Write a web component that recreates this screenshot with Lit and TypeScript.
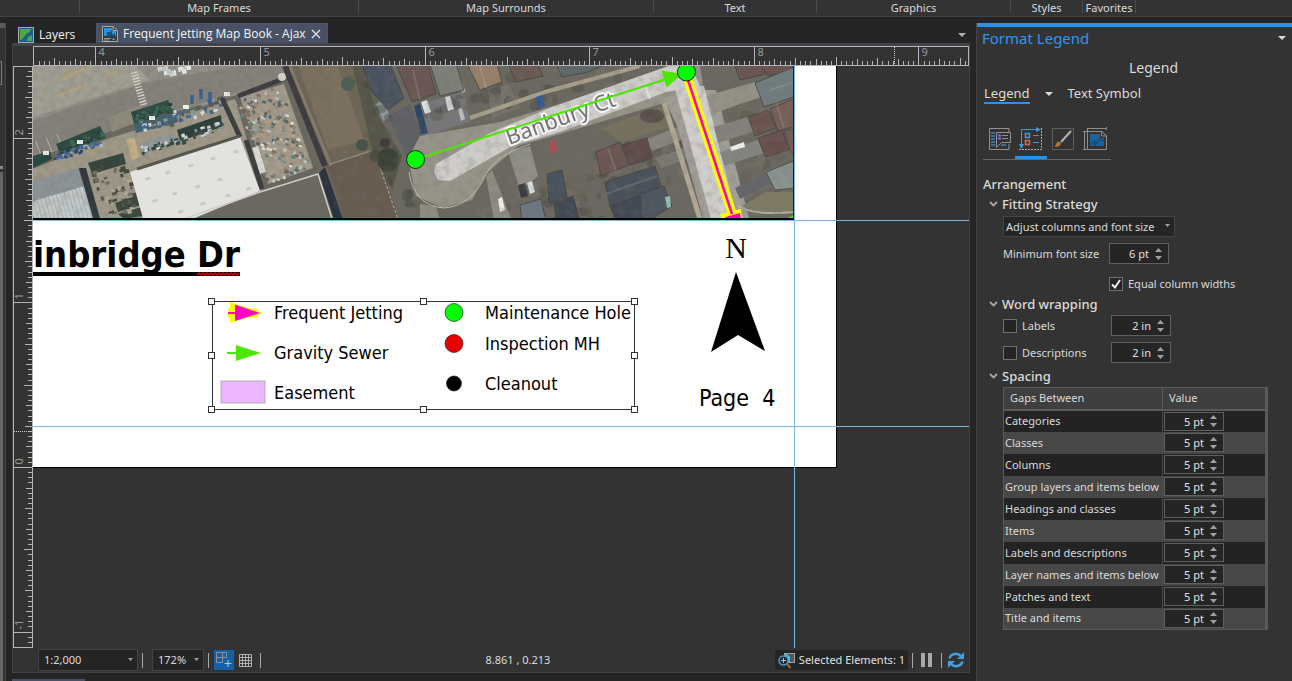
import { LitElement, html, svg, css, nothing } from "lit";
import { customElement, property, state } from "lit/decorators.js";
import { classMap } from "lit/directives/class-map.js";

type Pt = [number, number];

/* Small deterministic generator, so the aerial clutter is stable between renders. */
function generator(seed: number) {
  let s = seed;
  return () => {
    s = (s * 16807) % 2147483647;
    return s / 2147483647;
  };
}

/* Scatters small rotated blocks in the parallelogram origin + u*a + v*b. */
function scatter(seed: number, n: number, o: Pt, a: Pt, b: Pt, colors: string[], min: number, max: number, angle: number) {
  const r = generator(seed);
  return Array.from({ length: n }, () => {
    const u = r();
    const v = r();
    const x = o[0] + u * a[0] + v * b[0];
    const y = o[1] + u * a[1] + v * b[1];
    const w = min + r() * (max - min);
    const h = min + r() * (max - min) * 0.7;
    const c = colors[Math.floor(r() * colors.length)];
    return svg`<rect x=${x} y=${y} width=${w} height=${h} fill=${c} transform="rotate(${angle} ${x} ${y})"/>`;
  });
}

function blobs(seed: number, n: number, o: Pt, a: Pt, b: Pt, colors: string[], min: number, max: number) {
  const r = generator(seed);
  return Array.from({ length: n }, () => {
    const u = r();
    const v = r();
    const c = colors[Math.floor(r() * colors.length)];
    return svg`<ellipse cx=${o[0] + u * a[0] + v * b[0]} cy=${o[1] + u * a[1] + v * b[1]}
      rx=${min + r() * (max - min)} ry=${min + r() * (max - min)} fill=${c} opacity="0.45"/>`;
  });
}

const poly = (fill: string, points: string) => svg`<polygon fill=${fill} points=${points}/>`;

const downArrow = html`<svg viewBox="0 0 8 4" width="8" height="4" aria-hidden="true"><path d="M0 0h8L4 4z" fill="currentColor"/></svg>`;

@customElement("scale-ruler")
class ScaleRuler extends LitElement {
  @property({ type: Boolean, reflect: true }) vertical = false;
  @property({ type: Number }) origin = 0;
  @property({ type: Number }) cursor = 0;
  @state() private length = 0;
  private observer = new ResizeObserver(() => this.measure());

  static styles = css`
    :host { display: block; box-sizing: border-box; border: 1px solid #b4b4b4; min-width: 0; min-height: 0; }
    svg { display: block; width: 100%; height: 100%; overflow: visible; }
    line { stroke: #b4b4b4; stroke-width: 1; shape-rendering: crispEdges; }
    .cursor { stroke-dasharray: 1 1; stroke: #d0d0d0; }
    text { font: 11px "Noto Sans", sans-serif; fill: #9a9a9a; }
  `;

  connectedCallback() {
    super.connectedCallback();
    this.observer.observe(this);
  }

  disconnectedCallback() {
    super.disconnectedCallback();
    this.observer.disconnect();
  }

  firstUpdated() {
    this.measure();
  }

  private measure() {
    this.length = this.vertical ? this.clientHeight : this.clientWidth;
  }

  render() {
    const step = 164.6 / 32;
    const sign = this.vertical ? -1 : 1;
    const ends = [(0 - this.origin) / step, (this.length - 1 - this.origin) / step].map((v) => v * sign);
    const marks = [];
    for (let i = Math.ceil(Math.min(...ends)); i <= Math.max(...ends); i++) {
      const p = Math.round(this.origin + sign * i * step) + 0.5;
      const len = i % 32 === 0 ? 18 : i % 16 === 0 ? 8 : i % 8 === 0 ? 7 : i % 4 === 0 ? 6 : 4;
      if (len === 18) {
        marks.push(
          this.vertical
            ? svg`<text transform="translate(9 ${p - 3}) rotate(-90)">${i / 32}</text>`
            : svg`<text x=${p + 3} y="9">${i / 32}</text>`
        );
      }
      marks.push(
        this.vertical
          ? svg`<line x1=${18 - len} x2="18" y1=${p} y2=${p}/>`
          : svg`<line x1=${p} x2=${p} y1=${18 - len} y2="18"/>`
      );
    }
    return html`<svg aria-hidden="true">
      ${marks}
      ${this.vertical
        ? svg`<line class="cursor" x1="0" x2="18" y1=${this.cursor} y2=${this.cursor}/>`
        : svg`<line class="cursor" x1=${this.cursor} x2=${this.cursor} y1="0" y2="18"/>`}
    </svg>`;
  }
}

@customElement("unit-spinner")
class UnitSpinner extends LitElement {
  @property() value = "";
  @property() label = "";
  @property({ type: Boolean, reflect: true }) compact = false;

  static styles = css`
    :host { display: flex; box-sizing: border-box; width: 60px; height: 21px; background: #252525; border: 1px solid #5f5f5f; }
    :host([compact]) { height: 19px; }
    input { flex: 1; min-width: 0; padding: 0; border: 0; background: none; color: #e0e0e0; text-align: right; font: 11px "Noto Sans", sans-serif; outline: none; }
    .steps { display: flex; flex-direction: column; justify-content: center; gap: 4px; width: 19px; align-items: center; }
    button { display: block; padding: 0; border: 0; background: none; width: 7px; height: 4px; color: #a0a0a0; }
    svg { display: block; }
  `;

  render() {
    return html`
      <input type="text" aria-label=${this.label} .value=${this.value} />
      <span class="steps">
        <button aria-label="Increase"><svg width="7" height="4" viewBox="0 0 7 4"><path d="M0 4h7L3.500 0z" fill="currentColor"/></svg></button>
        <button aria-label="Decrease"><svg width="7" height="4" viewBox="0 0 7 4"><path d="M0 0h7L3.500 4z" fill="currentColor"/></svg></button>
      </span>`;
  }
}

@customElement("aerial-map")
class AerialMap extends LitElement {
  static styles = css`
    :host { display: block; }
    svg { display: block; width: 100%; height: 100%; }
    .street { font: 22px "Noto Sans", sans-serif; fill: #737377; stroke: #f4f4f4; stroke-width: 4px; paint-order: stroke; stroke-linejoin: round; }
  `;

  private houses: [string, string][] = [
    ["#49535e", "362,64 390,64 404,98 388,110 372,92"],
    ["#6b5652", "396,64 428,64 436,94 412,102"],
    ["#7d7f79", "430,64 456,64 464,90 440,96"],
    ["#97806a", "467,64 497,64 502,82 480,90"],
    ["#6b5a52", "508,64 538,64 543,76 516,82"],
    ["#5f6869", "556,64 606,64 588,72 562,77"],
    ["#6c5752", "596,152 620,142 629,165 601,176"],
    ["#5f4c48", "622,145 647,138 652,158 630,165"],
    ["#4a515a", "605,182 655,166 661,186 640,196 610,206"],
    ["#434a53", "610,206 640,196 648,221 616,221"],
    ["#4d555e", "640,194 664,186 672,206 648,221 642,221"],
    ["#4a525b", "547,174 562,170 567,197 549,203"],
    ["#434a53", "554,203 573,196 580,221 556,221"],
    ["#6d7780", "520,205 541,199 546,221 522,221"],
    ["#695551", "735,66 762,64 766,74 740,80"],
    ["#6a5350", "760,64 796,64 796,70 768,76"],
    ["#6f7b7d", "755,83 796,66 796,96 764,107"],
    ["#6a524e", "748,117 768,110 776,128 755,136"],
    ["#775f59", "770,109 796,98 796,126 778,131"],
    ["#684f4d", "758,138 782,130 789,150 765,157"],
    ["#735b57", "784,131 796,128 796,158 790,150"],
    ["#89938f", "766,172 796,160 796,188 775,190"],
  ];

  render() {
    return html`<svg viewBox="33 66 760 152" preserveAspectRatio="xMinYMin slice" role="img" aria-label="Aerial map">
      <defs>
        <filter id="grain" x="0" y="0" width="100%" height="100%">
          <feTurbulence type="fractalNoise" baseFrequency="0.16" numOctaves="4" seed="7"/>
          <feColorMatrix type="matrix" values="0 0 0 0 0.12  0 0 0 0 0.12  0 0 0 0 0.1  1.8 0 0 0 -0.7"/>
        </filter>
        <filter id="canopy" x="0" y="0" width="100%" height="100%">
          <feTurbulence type="fractalNoise" baseFrequency="0.12" numOctaves="4" seed="21"/>
          <feColorMatrix type="matrix" values="0 0 0 0 0.17  0 0 0 0 0.17  0 0 0 0 0.16  0 3.200 0 0 -1.4"/>
        </filter>
        <filter id="soften"><feGaussianBlur stdDeviation="0.7"/></filter>
        <pattern id="ribs" width="4" height="4" patternUnits="userSpaceOnUse" patternTransform="rotate(-16)">
          <rect width="4" height="4" fill="#c3c9c9"/><rect width="1" height="4" fill="#aab1b2"/>
        </pattern>
      </defs>
      <rect x="33" y="66" width="761" height="153" fill="#6b6860"/>
      <g filter="url(#soften)">
        ${poly("#918f86", "30,60 290,60 284,82 226,98 130,124 30,160")}
        ${poly("#a19f93", "30,60 130,60 150,80 30,118")}
        ${poly("#85827a", "30,122 148,82 240,66 285,66 280,80 130,124 30,158")}
        ${poly("#8e8a7b", "108,118 140,105 143,120 112,132")}
        <path d="M55 97L88 84M60 80L70 76L66 70M70 76L90 66M105 76L118 71" stroke="#b4a37a" fill="none" stroke-width="2"/>
        <path d="M134 72L144 106" stroke="#d6d5cd" stroke-width="7" stroke-dasharray="1.500 1.500"/>
        <path d="M36 142L42 158M46 137L52 152M57 134L60 142" stroke="#bdbcb4" stroke-width="1"/>
        ${poly("#a09989", "30,170 110,138 235,99 262,190 140,222 95,222 82,168 30,184")}
        ${poly("#c4b184", "126,140 134,137 140,157 132,160")}
        ${poly("#2e4b42", "131,112 168,100 173,113 134,124")}
        ${poly("#2c4a3f", "56,144 100,126 106,138 60,152")}
        ${poly("#284743", "33,156 50,151 52,159 33,168")}
        ${poly("#3f6273", "134,125 176,112 178,122 136,133")}
        ${poly("#2d3f3a", "177,130 221,115 222,127 180,141")}
        ${poly("#8d999c", "140,144 176,134 178,143 142,153")}
        ${poly("#36443a", "88,163 123,153 126,164 92,174")}
        ${poly("#3a463a", "115,203 138,195 141,205 118,212")}
        ${poly("#3d4a3f", "118,214 142,207 143,216 124,219")}
        ${scatter(5, 46, [52, 154], [48, -15], [2, 6], ["#3e64a0", "#3f679c", "#2b4564", "#b7bfc3"], 2, 4, -16)}
        ${scatter(8, 50, [132, 114], [38, -12], [2, 9], ["#36594b", "#24423a", "#3c6d5b"], 2, 4, -16)}
        ${scatter(18, 50, [57, 145], [44, -17], [2, 8], ["#36594b", "#24423a", "#3c6d5b"], 2, 4, -16)}
        ${scatter(11, 70, [140, 120], [84, -26], [2, 12], ["#d6d8d5", "#8e999c", "#4b6577", "#5d5a50", "#426a97"], 2, 5, -16)}
        ${scatter(13, 60, [140, 146], [78, -25], [2, 8], ["#d6d8d5", "#36504b", "#8e999c", "#384540"], 2, 5, -16)}
        ${scatter(17, 50, [88, 168], [32, -8], [20, 48], ["#454a3e", "#b2ab9b", "#746e62", "#57594c"], 2, 6, -16)}
        <path d="M192 95V104M201 89V99M210 92V103" stroke="#3a5f95" stroke-width="3.500"/>
        ${scatter(31, 12, [157, 67], [30, -4], [2, 7], ["#e8ece9", "#cfd4d2"], 4, 6, -12)}
        <path d="M149 118h6M183 107h6M224 94h6M77 142h6M43 153h6" stroke="#f0f0eb" stroke-width="4"/>
        ${poly("#a39b8b", "240,97 284,84 313,168 268,184")}
        ${scatter(23, 190, [236, 100], [44, -15], [30, 82], ["#8b9a98", "#5d8585", "#c9c6ba", "#66625a", "#b4a790", "#4f687a", "#9b8069", "#e0e0dc", "#7d7465"], 1.5, 4.5, 20)}
        ${poly("#d9dbd8", "252,148 258,146 266,172 260,174")}
        <path d="M222 98L240 137M246 140L262 189" stroke="#3b3d40" stroke-width="5"/>
        <path d="M238 96L286 78" stroke="#3d3d42" stroke-width="5"/>
        <circle cx="282" cy="77" r="4" fill="#d8d8d0"/>
        ${poly("#8d9497", "30,182 78,168 84,186 30,202")}
        ${poly("url(#ribs)", "30,202 84,186 95,222 30,222")}
        ${poly("#30383d", "79,168 86,168 101,222 94,222")}
        ${poly("#6d6864", "184,222 260,192 318,174 335,222")}
        ${poly("#2c333c", "319,173 325,167 344,222 335,222")}
        ${poly("#6e6655", "290,62 356,62 396,160 330,166")}
        ${poly("#7b6f5e", "298,66 338,66 364,140 328,150")}
        ${poly("#685c51", "326,164 376,148 400,222 345,222")}
        <path d="M285 66L325 166" stroke="#3c3b3f" stroke-width="6"/>
        <path d="M290 66L331 166" stroke="#867b6c" stroke-width="3"/>
        <path d="M330 164L380 148" stroke="#8f897b" stroke-width="1.500"/>
        <path d="M353 66L374 150L398 219" stroke="#b3b1a2" stroke-width="1" stroke-dasharray="3 2" fill="none"/>
        ${poly("#545548", "352,64 364,64 376,112 402,156 392,190 372,150")}
        ${poly("#8b979b", "376,104 384,98 390,118 383,121")}
        ${poly("#5f6166", "388,116 410,104 424,140 406,156")}
        ${poly("#77777a", "418,104 464,92 470,122 426,136")}
        ${poly("#75736d", "488,92 508,84 520,108 492,118")}
        ${blobs(61, 60, [410, 84], [250, -20], [10, 35], ["#55544b", "#6a655a", "#78736a", "#4a4a42"], 2, 7)}
        ${blobs(62, 120, [475, 215], [190, -95], [40, 50], ["#5a564d", "#6b6257", "#766c5f", "#4c4c46", "#7d746a"], 2, 7)}
        ${blobs(63, 70, [715, 95], [85, -15], [15, 120], ["#5f6054", "#76736a", "#565a4c", "#7b776a"], 3, 8)}
        ${blobs(64, 16, [350, 80], [30, 0], [40, 130], ["#4b5346", "#5c5e50", "#3e473c"], 3, 7)}
        <ellipse cx="388" cy="160" rx="11" ry="12" fill="#3c4338"/><circle cx="362" cy="145" r="6" fill="#47554a"/>
        <circle cx="348" cy="84" r="7" fill="#4c5f55"/><circle cx="385" cy="143" r="5" fill="#3f3b3a"/>
        <path d="M453 66L464 92" stroke="#b1aa98" stroke-width="4"/>
        <path d="M470 118L545 92L640 66" stroke="#a8a08c" stroke-width="4" fill="none"/>
        ${poly("#8f8e88", "508,152 530,146 538,176 520,190")}
        ${poly("#8e8b83", "486,176 492,170 512,221 494,221")}
        ${poly("#8f8c82", "420,204 436,206 440,221 420,221")}
        ${poly("#979489", "408,158 420,136 500,122 560,104 672,66 700,66 704,92 668,102 560,134 518,146 486,174 472,200 442,208 416,196")}
        <path d="M409 172Q414 206 444 208Q472 206 486 174Q494 156 530 144" stroke="#bdbbb0" stroke-width="1" fill="none"/>
        ${poly("#cecdca", "436,164 492,132 552,107 674,64 690,64 700,86 666,92 560,132 512,146 450,181 438,180 434,172")}
        ${poly("#77705f", "600,128 662,106 672,126 622,142")}
        <ellipse cx="652" cy="116" rx="12" ry="7" fill="#5a4f48"/>
        ${poly("#87857f", "647,139 690,122 696,134 652,151")}
        ${poly("#7b7974", "655,158 695,144 700,154 662,168")}
        <path d="M664 103L700 219" stroke="#b0a894" stroke-width="5"/>
        ${poly("#a09e96", "664,98 700,90 716,90 750,222 704,222 678,128")}
        ${poly("#cfcecb", "674,86 704,86 738,222 712,222")}
        ${poly("#959388", "706,96 755,82 764,96 714,113")}
        ${poly("#84827d", "714,127 748,117 755,131 718,143")}
        ${poly("#858480", "720,152 758,140 764,153 724,166")}
        ${poly("#63656a", "735,188 774,170 780,178 740,199")}
        ${poly("#7e7a63", "742,206 765,192 794,192 794,212 760,214")}
        <path d="M737 205Q752 216 794 212" stroke="#b1aea4" stroke-width="2" fill="none"/>
        ${this.houses.map(([fill, points]) => svg`<polygon points=${points} fill=${fill} stroke="#45433f" stroke-width="0.8"/>`)}
        <path d="M413 70L420 100M480 66L486 88M608 148L616 171M776 102L784 128M606 194L657 176M770 90L794 82" stroke="#fff" stroke-opacity="0.12" stroke-width="2" fill="none"/>
        ${poly("#315d93", "536,97 542,95 545,106 539,109")}
        ${poly("#2c4566", "414,106 420,104 428,133 421,134")}
        ${poly("#b94650", "549,142 554,140 557,151 552,154")}
        ${poly("#dfe2e3", "421,102 427,100 431,112 425,114")}
        ${poly("#cfd2d3", "445,97 450,96 454,109 448,111")}
        ${poly("#b8bbbc", "458,109 462,108 465,119 461,121")}
        ${poly("#3a3d43", "518,185 525,183 528,196 521,198")}
        ${poly("#e9eaea", "498,199 502,197 505,210 500,212")}
        ${poly("#dde0e1", "527,183 532,181 535,192 530,194")}
        ${poly("#e9ecec", "730,147 744,142 745,147 731,151")}
        ${poly("#8fc0b4", "665,197 670,196 671,207 667,208")}
        <path d="M646 88l4 11" stroke="#e6e6e2" stroke-width="1.500"/>
      </g>
      <rect x="33" y="66" width="300" height="153" filter="url(#grain)" opacity="0.250"/>
      <rect x="333" y="66" width="461" height="153" filter="url(#canopy)" opacity="0.220"/>
      <g filter="url(#soften)">
        ${poly("#e2e3de", "130,172 240,137 260,191 185,222 144,222")}
        <path d="M137 169L240 136" stroke="#56584c" stroke-width="3"/>
        ${[[145, 178], [165, 172], [188, 165], [210, 158], [233, 151], [152, 200], [172, 193], [195, 186], [217, 179], [178, 211], [200, 203], [225, 195], [246, 188]].map(
          ([x, y]) => svg`<rect x=${x} y=${y} width="5" height="3" fill="#c3cac8" transform="rotate(-18 ${x} ${y})"/>`
        )}
        <path d="M184 219L260 192L318 174L333 222" stroke="#cdccc5" fill="none" stroke-width="1.500"/>
      </g>
      <text class="street" transform="translate(509 145) rotate(-20)">Banbury Ct</text>
      <path d="M415.500 159.500L668 78.500" stroke="#4ce600" stroke-width="2"/>
      ${poly("#4ce600", "661.500,70.500 682,74 666.500,87.500")}
      <path d="M688 80L732 213" stroke="#ffff00" stroke-width="9"/>
      ${poly("#ffff00", "720,214 741,209 742,219 722,219")}
      <path d="M688 80L732 214" stroke="#ff00c5" stroke-width="2.500"/>
      ${poly("#ff00c5", "729,216 740,213 741,219 722,219")}
      <circle cx="415.500" cy="159.500" r="9" fill="#00ff00" stroke="#222" stroke-width="1"/>
      <circle cx="686.500" cy="72" r="9" fill="#00ff00" stroke="#222" stroke-width="1"/>
      ${poly("#4ce600", "786,219 794,215 794,219")}
    </svg>`;
  }
}

@customElement("layout-canvas")
class LayoutCanvas extends LitElement {
  static styles = css`
    :host { display: block; position: relative; overflow: hidden; background: #333; color: #000; font: 18px/22px "DejaVu Sans Condensed", "DejaVu Sans", sans-serif; }
    .page { position: absolute; left: 0; top: 0; width: 803px; height: 401px; background: #fff; border: solid #000; border-width: 0 1px 1px 0; }
    .frame { position: absolute; left: 0; top: 0; width: 760px; height: 152px; border-right: 1px solid #1c1c1c; border-bottom: 2px solid #000; }
    .guide { position: absolute; background: #7cb9df; }
    .margin-top { left: 0; right: 0; top: 154px; height: 1px; }
    .margin-bottom { left: 0; right: 0; top: 360px; height: 1px; }
    .margin-right { top: 0; bottom: 0; left: 761px; width: 1px; }
    .title { position: absolute; left: 0; top: 166px; margin: 0; height: 40px; border-bottom: 4px solid #000; font-size: 36px; line-height: 46px; font-weight: 700; white-space: nowrap; }
    .misspelt { position: absolute; right: 0; bottom: -4px; }
    .north { position: absolute; left: 678px; top: 166px; display: flex; flex-direction: column; gap: 8px; }
    .north-letter { width: 50px; text-align: center; font: 30px/32px "Liberation Serif", serif; }
    .page-number { position: absolute; left: 666px; top: 318px; font-size: 23px; line-height: 28px; white-space: pre; }
    .legend { position: absolute; left: 179px; top: 235px; box-sizing: border-box; width: 423px; height: 109px; border: 1px solid #333; }
    .columns { display: flex; }
    ul { list-style: none; margin: 0; padding: 0; display: flex; flex-direction: column; }
    .lines { width: 222px; padding-left: 7px; gap: 18px; }
    .points { gap: 9px; }
    li { display: flex; align-items: center; height: 22px; white-space: nowrap; }
    .lines li { gap: 8px; }
    .points li { gap: 19px; }
    .spaced { margin-top: 9px; }
    .handle { position: absolute; box-sizing: border-box; width: 7px; height: 7px; background: #fff; border: 1px solid #333; }
    .l { left: -5px; } .c { left: 207px; } .r { right: -4px; }
    .t { top: -4px; } .m { top: 50px; } .b { bottom: -4px; }
    svg { display: block; overflow: visible; }
  `;

  render() {
    const handles = ["l t", "c t", "r t", "l m", "r m", "l b", "c b", "r b"];
    return html`
      <div class="page"></div>
      <aerial-map class="frame"></aerial-map>
      <h1 class="title">inbridge Dr
        <svg class="misspelt" width="43" height="4" aria-hidden="true"><path d="M0 3l2-2l2 2l2-2l2 2l2-2l2 2l2-2l2 2l2-2l2 2l2-2l2 2l2-2l2 2l2-2l2 2l2-2l2 2l2-2l2 2l2-2" fill="none" stroke="#e00000" stroke-width="1.500"/></svg>
      </h1>
      <div class="north">
        <span class="north-letter">N</span>
        <svg width="54" height="80" viewBox="0 0 54 80" aria-hidden="true"><path d="M25 0L54 79L27 63L0 80z"/></svg>
      </div>
      <div class="page-number">Page  4</div>
      <span class="guide margin-top"></span>
      <span class="guide margin-bottom"></span>
      <span class="guide margin-right"></span>
      <section class="legend" aria-label="Legend">
        <div class="columns">
          <ul class="lines">
            <li><svg width="46" height="22" aria-hidden="true">
                <path d="M8 6.500H38V15.500H8z" fill="#ff0"/><path d="M10 0L43 11L10 21z" fill="#ff0"/><path d="M8 10h8v2H8z" fill="#ff00c5"/><path d="M15 2.500L40 11L15 19z" fill="#ff00c5"/>
              </svg>Frequent Jetting</li>
            <li><svg width="46" height="22" aria-hidden="true"><path d="M7 11H20" stroke="#4ce600" stroke-width="2"/><path d="M16 3L41 11L16 19z" fill="#4ce600"/></svg>Gravity Sewer</li>
            <li><svg width="46" height="22" aria-hidden="true"><rect x="1" y="-1" width="44" height="22" fill="#ebb6ff" stroke="#b2b2b2"/></svg>Easement</li>
          </ul>
          <ul class="points">
            ${[["Maintenance Hole", "#00ff00", 9], ["Inspection MH", "#e60000", 9], ["Cleanout", "#000", 7.5]].map(
              ([name, fill, r], i) => html`<li class=${classMap({ spaced: i === 2 })}>
                <svg width="24" height="22" aria-hidden="true"><circle cx="12" cy="10.500" r=${r} fill=${fill} stroke="#222" stroke-width="0.700"/></svg>${name}</li>`
            )}
          </ul>
        </div>
        ${handles.map((h) => html`<span class="handle ${h}"></span>`)}
      </section>`;
  }
}

@customElement("format-panel")
class FormatPanel extends LitElement {
  private gaps = ["Categories", "Classes", "Columns", "Group layers and items below", "Headings and classes", "Items", "Labels and descriptions", "Layer names and items below", "Patches and text", "Title and items"];

  static styles = css`
    :host { display: block; background: #333; color: #dadada; border-left: 1px solid #434346; font: 11px/20px "Noto Sans", sans-serif; padding: 0 24px 8px 6px; }
    header { display: flex; justify-content: space-between; align-items: center; margin: 0 -24px 0 -6px; padding: 0 6px 0 5px; border-top: 4px solid #2693f0; height: 22px; }
    h1 { margin: 0; color: #2a97f3; font-size: 15px; line-height: 22px; font-weight: 400; }
    h2, h3 { margin: 0; font-weight: 500; font-size: 13px; line-height: 20px; }
    button, select, input { font: inherit; color: inherit; }
    button { background: none; border: 0; padding: 0; display: block; }
    svg { display: block; }
    .element { margin: 0; padding: 4px 0 0 56px; text-align: center; font-size: 14px; line-height: 30px; }
    .tabs { display: flex; align-items: center; gap: 15px; height: 21px; padding-left: 1px; }
    .tab { height: 21px; line-height: 18px; font-size: 13px; border-bottom: 2px solid transparent; }
    .tab.current { border-color: #2693f0; }
    .tools { display: flex; width: 128px; margin-top: 22px; border-bottom: 1px solid #666; }
    .tool { width: 32px; height: 33px; padding: 0 0 5px 4px; border-bottom: 3px solid transparent; box-sizing: border-box; }
    .tool.current { border-color: #2693f0; }
    h2 { margin-top: 14px; }
    h3 { display: flex; align-items: center; gap: 4px; padding-left: 6px; }
    .body { padding-left: 20px; }
    .combo { position: relative; display: inline-flex; align-items: center; margin-top: 2px; vertical-align: top; }
    select { appearance: none; width: 172px; height: 21px; padding: 0 14px 0 2px; background: #252525; border: 1px solid #444; border-radius: 0; line-height: 19px; }
    .combo svg { position: absolute; right: 5px; top: 8px; color: #a0a0a0; }
    .row { display: grid; grid-template-columns: 106px auto 1fr; align-items: center; height: 21px; margin-top: 6px; }
    .row.wrap { grid-template-columns: 108px auto 1fr; }
    .row.wrap.first { margin-top: 1px; }
    .check { display: flex; align-items: center; gap: 5px; height: 21px; }
    .check.offset { margin: 9px 0 0 106px; }
    .check input { appearance: none; box-sizing: border-box; width: 14px; height: 14px; margin: 0; background: #252525; border: 1px solid #707070; }
    .tick { position: relative; display: flex; }
    .tick svg { position: absolute; left: 2px; top: 2px; pointer-events: none; }
    table { border-collapse: collapse; table-layout: fixed; width: 100%; margin-top: 1px; border: 1px solid #5a5a5a; border-right-width: 3px; }
    th { box-sizing: border-box; height: 22px; padding: 0 6px; text-align: left; font-weight: 400; line-height: 20px; background: #3f3f3f; border-bottom: 2px solid #5a5a5a; }
    th:first-child { width: 159px; }
    th + th, td + td { border-left: 1px solid #4a4a4a; }
    th + th { border-left-color: #5a5a5a; padding-left: 6px; }
    td { box-sizing: border-box; height: 22px; padding: 0 1px; line-height: 18px; background: #232323; white-space: nowrap; overflow: hidden; }
    tr:nth-child(even) td { background: #474747; }
    h3.spacing { margin-top: 3px; }
  `;

  private heading(text: string, cls = "") {
    return html`<h3 class=${cls}><svg width="9" height="6" viewBox="0 0 9 6" aria-hidden="true"><path d="M1 1L4.500 4.500L8 1" fill="none" stroke="#a8a8a8" stroke-width="1.800"/></svg>${text}</h3>`;
  }

  render() {
    return html`
      <header><h1>Format Legend</h1><button aria-label="Pane options">${downArrow}</button></header>
      <p class="element">Legend</p>
      <nav class="tabs">
        <button class="tab current">Legend</button>${downArrow}<button class="tab">Text Symbol</button>
      </nav>
      <div class="tools">
        <button class="tool" aria-label="Options"><svg width="24" height="24" viewBox="0 0 24 24" fill="none">
          <path d="M22 5V1.500H2.500V22.500H22V17" stroke="#929292"/><path d="M4 6h4M4 9h4M4 12h4M4 15h4M4 18h4M14 18h5" stroke="#3c87b8" stroke-width="1.500"/>
          <path d="M9.500 5.500h14v10h-9l-5 5z" fill="#333" stroke="#929292"/><path d="M11 8.500h3M11 11.500h3" stroke="#8a6fd0" stroke-width="2"/><path d="M15 8.500h6M15 11.500h6" stroke="#929292"/>
        </svg></button>
        <button class="tool current" aria-label="Arrangement"><svg width="24" height="24" viewBox="0 0 24 24" fill="none">
          <path d="M2.500 18V2.500H18" stroke="#3c9be0"/><path d="M17 0l5 2.500L17 5zM0 17h5l-2.500 5z" fill="#3c9be0"/>
          <path d="M22.500 1v21.500H0" stroke="#b0b0b0" stroke-dasharray="2 1"/><rect x="6.500" y="6.500" width="4" height="4" stroke="#3c9be0" stroke-width="1.500"/><rect x="6.500" y="13.500" width="4" height="4" stroke="#e8643c" stroke-width="1.500"/><path d="M14 8.500h6M14 15.500h6" stroke="#3c9be0"/>
        </svg></button>
        <button class="tool" aria-label="Display"><svg width="24" height="24" viewBox="0 0 24 24" fill="none">
          <rect x="1.500" y="1.500" width="21" height="21" stroke="#8a8a8a" stroke-dasharray="1 1"/><path d="M20 4L10 15" stroke="#b4b4b4" stroke-width="2"/><path d="M4 20q1-5 4-5.500l2 2q-1 3.500-6 3.500z" fill="#b8762e"/>
        </svg></button>
        <button class="tool" aria-label="Placement"><svg width="24" height="24" viewBox="0 0 24 24" fill="none">
          <path d="M0 4.500h19M1.500 4v19M4.500 1v3M4.500 1.500H24M23.500 0v3M0 22.500h4M4.500 4v18.500h19V9l-5-5" stroke="#8e8e8e"/><path d="M7 7h10v4h4v8H7z" fill="#1c639c"/><path d="M7 18l4-4 3 2 3-4 4 2M12 19v-4" stroke="#174f7d" stroke-width="2"/><path d="M18.500 4v5h5z" fill="#333" stroke="#8e8e8e"/>
        </svg></button>
      </div>
      <h2>Arrangement</h2>
      ${this.heading("Fitting Strategy")}
      <div class="body">
        <div class="combo"><select aria-label="Fitting Strategy"><option>Adjust columns and font size</option></select>
          <svg width="5" height="3" viewBox="0 0 5 3" aria-hidden="true"><path d="M0 0h5L2.500 3z" fill="currentColor"/></svg></div>
        <div class="row"><span>Minimum font size</span><unit-spinner label="Minimum font size" value="6 pt"></unit-spinner></div>
        <label class="check offset"><span class="tick"><input type="checkbox" checked /><svg width="10" height="10" viewBox="0 0 10 10"><path d="M1 5.500L4 8.500L9 1" fill="none" stroke="#f0f0f0" stroke-width="2"/></svg></span>Equal column widths</label>
      </div>
      ${this.heading("Word wrapping")}
      <div class="body">
        ${["Labels", "Descriptions"].map((name, i) => html`<div class=${classMap({ row: true, wrap: true, first: i === 0 })}>
          <label class="check"><input type="checkbox" />${name}</label><unit-spinner label=${name} value="2 in"></unit-spinner></div>`)}
      </div>
      ${this.heading("Spacing", "spacing")}
      <div class="body">
        <table>
          <thead><tr><th>Gaps Between</th><th>Value</th></tr></thead>
          <tbody>${this.gaps.map((g) => html`<tr><td>${g}</td><td><unit-spinner compact label=${g} value="5 pt"></unit-spinner></td></tr>`)}</tbody>
        </table>
      </div>`;
  }
}

@customElement("app-root")
class AppRoot extends LitElement {
  private groups = ["", "Map Frames", "Map Surrounds", "Text", "Graphics", "Styles", "Favorites"];

  static styles = css`
    :host { display: flex; flex-direction: column; min-height: 100vh; background: #252525; color: #dadada; font: 11px/16px "Noto Sans", sans-serif; }
    button, select { font: inherit; color: inherit; }
    button { display: flex; align-items: center; padding: 0; border: 0; background: none; }
    svg { display: block; flex: none; }
    .ribbon { display: grid; grid-template-columns: 80fr 279fr 295fr 163fr 194fr 72fr 53fr 156fr; height: 16px; background: #333; border-bottom: 1px solid #434346; text-align: center; }
    .group { box-sizing: border-box; height: 13px; border-right: 1px solid #4a4a50; white-space: nowrap; }
    .workspace { flex: 1; display: flex; padding-top: 6px; }
    .edge { display: flex; flex-direction: column; box-sizing: border-box; width: 6px; margin-right: 6px; background: #333; border-right: 1px solid #434346; border-top: 5px solid #5a5a5a; }
    .edge-box { width: 1px; height: 22px; margin-top: 33px; border: 1px solid #777; border-left: 0; }
    .edge-arrow { margin-top: 81px; width: 3px; height: 3px; background: #888; }
    .edge-bar { flex: 1; width: 3px; margin-top: 3px; background: #666; }
    .center { flex: 1; min-width: 0; display: flex; flex-direction: column; margin-right: 6px; }
    .view { flex: 1; display: grid; grid-template-rows: 20px 3px 20px 1fr 24px; grid-template-columns: 20px 1fr; box-sizing: border-box; border: solid #434346; border-width: 0 1px 1px 1px; background: #333; margin-bottom: 6px; }
    .view-tabs { grid-column: 1 / -1; display: flex; align-items: stretch; background: #252525; margin: 0 -1px; }
    .view-tab { box-sizing: border-box; gap: 5px; padding: 2px 6px 0 5px; height: 21px; color: #f4f4f4; font: 12px/16px "Open Sans", "Noto Sans", sans-serif; }
    .view-tab.layers { width: 84px; padding-left: 6px; }
    .view-tab.active { background: #495264; border: 1px solid #4f5563; padding-top: 1px; }
    .view-tabs .more { margin-left: auto; padding: 4px 4px 0 0; color: #b0b0b0; }
    .rule { grid-column: 1 / -1; background: #434349; }
    .status { grid-column: 1 / -1; display: flex; align-items: center; padding: 0 5px 0 25px; }
    .combo { position: relative; display: flex; }
    .combo select { appearance: none; height: 22px; border: 1px solid #434346; border-radius: 0; background: #252525; padding: 0 5px; }
    .scale { width: 100px; }
    .zoom { width: 52px; }
    .combo svg { position: absolute; right: 5px; top: 9px; color: #a0a0a0; }
    .bar { width: 1px; height: 15px; background: #a8a8a8; }
    .bar.a { margin: 0 9px 0 4px; }
    .bar.b { margin: 0 5px 0 4px; }
    .bar.c { margin-left: 8px; }
    .bar.d { margin-left: 4px; }
    .grid-on { width: 20px; height: 20px; background: #1461a8; margin-right: 5px; }
    .coords { flex: 1; text-align: center; white-space: nowrap; }
    .selected { gap: 4px; height: 20px; padding: 0 3px; background: #252525; white-space: nowrap; color: #e0e0e0; }
    .pause { margin: 0 9px 0 8px; }
    .refresh { margin-left: 6px; }
    .dock { width: 73px; height: 2px; background: #495264; }
    format-panel { width: 316px; box-sizing: border-box; }
  `;

  render() {
    const small = html`<svg width="5" height="3" viewBox="0 0 5 3" aria-hidden="true"><path d="M0 0h5L2.500 3z" fill="currentColor"/></svg>`;
    return html`
      <div class="ribbon">${this.groups.map((g) => html`<span class="group">${g || nothing}</span>`)}</div>
      <div class="workspace">
        <div class="edge"><span class="edge-box"></span><span class="edge-arrow"></span><span class="edge-bar"></span></div>
        <main class="center">
          <div class="view">
            <nav class="view-tabs">
              <button class="view-tab layers"><svg width="16" height="16" viewBox="0 0 16 16">
                <rect x="0.500" y="0.500" width="15" height="15" fill="#1b5f8c" stroke="#aaa"/><path d="M2 2h11v3L9 7 7 12 2 13z" fill="#4da846"/><path d="M5 14l2-4 3-1 4-3v3l-3 5z" fill="#4da846"/><path d="M13 2h1v12H3l3-4 3-4 3-1z" fill="#1b5f8c"/><path d="M10 10l4-2v6h-5z" fill="#4da846"/>
              </svg>Layers</button>
              <button class="view-tab active"><svg width="16" height="16" viewBox="0 0 16 16" fill="none">
                <path d="M0.500 0.500H11l4.500 4V15.500H0.500z" fill="#3a3a3a" stroke="#aaa"/><path d="M2 2h8v3h4v5H2z" fill="#2a91dc"/><path d="M5 8V6h3l2-2v4h3v2H4z" fill="#175484"/><path d="M11 0.500v4h4" stroke="#aaa"/><path d="M2 12.500h7M2 14h5" stroke="#999"/><path d="M12 11.500l1 2.500h-3z" fill="#3ea0e6"/>
              </svg>Frequent Jetting Map Book - Ajax<svg width="10" height="10" viewBox="0 0 10 10"><path d="M1 1l8 8M9 1l-8 8" stroke="#ddd" stroke-width="1.400"/></svg></button>
              <button class="more" aria-label="Open views">${downArrow}</button>
            </nav>
            <div class="rule"></div>
            <span></span>
            <scale-ruler .origin=${-597} .cursor=${860.5}></scale-ruler>
            <scale-ruler vertical .origin=${400} .cursor=${364.5}></scale-ruler>
            <layout-canvas></layout-canvas>
            <div class="status">
              <div class="combo"><select class="scale" aria-label="Map scale"><option>1:2,000</option></select>${small}</div>
              <span class="bar a"></span>
              <div class="combo"><select class="zoom" aria-label="Zoom"><option>172%</option></select>${small}</div>
              <span class="bar b"></span>
              <button class="grid-on" aria-label="Snapping guides"><svg width="20" height="20" viewBox="0 0 20 20"><path d="M2.500 2.500h10v5h-4v5h-6zM2.500 7.500h6V2.500" fill="none" stroke="#8a9099"/><path d="M14 10v7M10.500 13.500h7" stroke="#b8c4d0"/></svg></button>
              <button aria-label="Grid"><svg width="13" height="13" viewBox="0 0 13 13"><path d="M.5 .5h12v12H.5zM3.500 0v13M6.500 0v13M9.500 0v13M0 3.500h13M0 6.500h13M0 9.500h13" fill="none" stroke="#b0b0b0"/></svg></button>
              <span class="bar c"></span>
              <span class="coords">8.861 , 0.213</span>
              <button class="selected"><svg width="17" height="17" viewBox="0 0 17 17">
                <rect x="6.500" y="1.500" width="10" height="9" fill="#555" stroke="#a0a0a0"/><path d="M7 2l4 3v5" stroke="#35c3e8" stroke-width="2" fill="none"/><circle cx="5.500" cy="8.500" r="4.500" fill="#252525" stroke="#3c9be0" stroke-width="1.500"/><path d="M3 8.500h5M5.500 6v5" stroke="#9cc8ea"/><path d="M9 12l3.500 4" stroke="#9a6432" stroke-width="2"/>
              </svg>Selected Elements: 1</button>
              <span class="bar d"></span>
              <button class="pause" aria-label="Pause"><svg width="11" height="14"><path d="M0 0h4v14H0zM7 0h4v14H7z" fill="#a8a8a8"/></svg></button>
              <span class="bar"></span>
              <button class="refresh" aria-label="Refresh"><svg width="16" height="16" viewBox="0 0 16 16"><path d="M1.500 6.500A6.500 5.500 0 0 1 13 4M14.500 9.500A6.500 5.500 0 0 1 3 12" fill="none" stroke="#419fdf" stroke-width="2.500"/><path d="M16 0v7H9zM0 16V9h7z" fill="#419fdf"/></svg></button>
            </div>
          </div>
          <div class="dock"></div>
        </main>
        <format-panel></format-panel>
      </div>`;
  }
}
